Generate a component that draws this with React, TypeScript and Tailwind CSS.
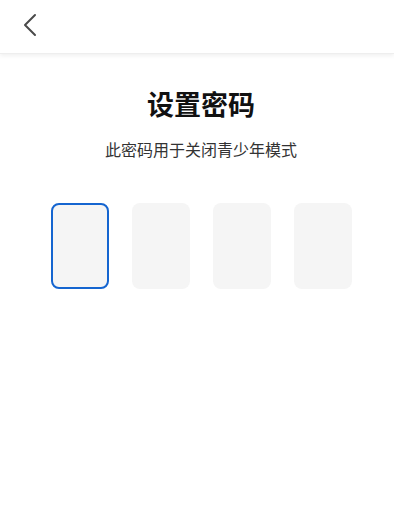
export default function App() {
  const digits = ['', '', '', ''];
  const active = 0;

  return (
    <div className="w-[394px] h-[522px] bg-white font-['Noto_Sans_CJK_SC',sans-serif] overflow-hidden">
      {/* Top bar */}
      <div className="h-[54px] flex items-center pl-[22px] bg-white shadow-[0_2px_4px_rgba(0,0,0,0.06)] border-b border-[#eeeeee]">
        <svg width="16" height="24" viewBox="0 0 16 24" fill="none" className="-mt-[4px]">
          <path d="M13 2 L3 12 L13 22" stroke="#4a4a4a" strokeWidth="2" strokeLinecap="round" strokeLinejoin="round" />
        </svg>
      </div>

      {/* Body */}
      <div className="flex flex-col items-center pl-[8px]">
        <h1 className="mt-[32px] text-[27px] leading-[36px] font-bold text-[#111111]">设置密码</h1>
        <p className="mt-[15px] text-[16px] leading-[24px] text-[#333333]">此密码用于关闭青少年模式</p>

        <div className="mt-[42px] flex gap-[23px]">
          {digits.map((d, i) => (
            <div
              key={i}
              className={`w-[58px] h-[86px] rounded-[8px] bg-[#f5f5f5] flex items-center justify-center text-2xl ${
                i === active ? 'border-2 border-[#1565d0]' : ''
              }`}
            >
              {d}
            </div>
          ))}
        </div>
      </div>
    </div>
  );
}
